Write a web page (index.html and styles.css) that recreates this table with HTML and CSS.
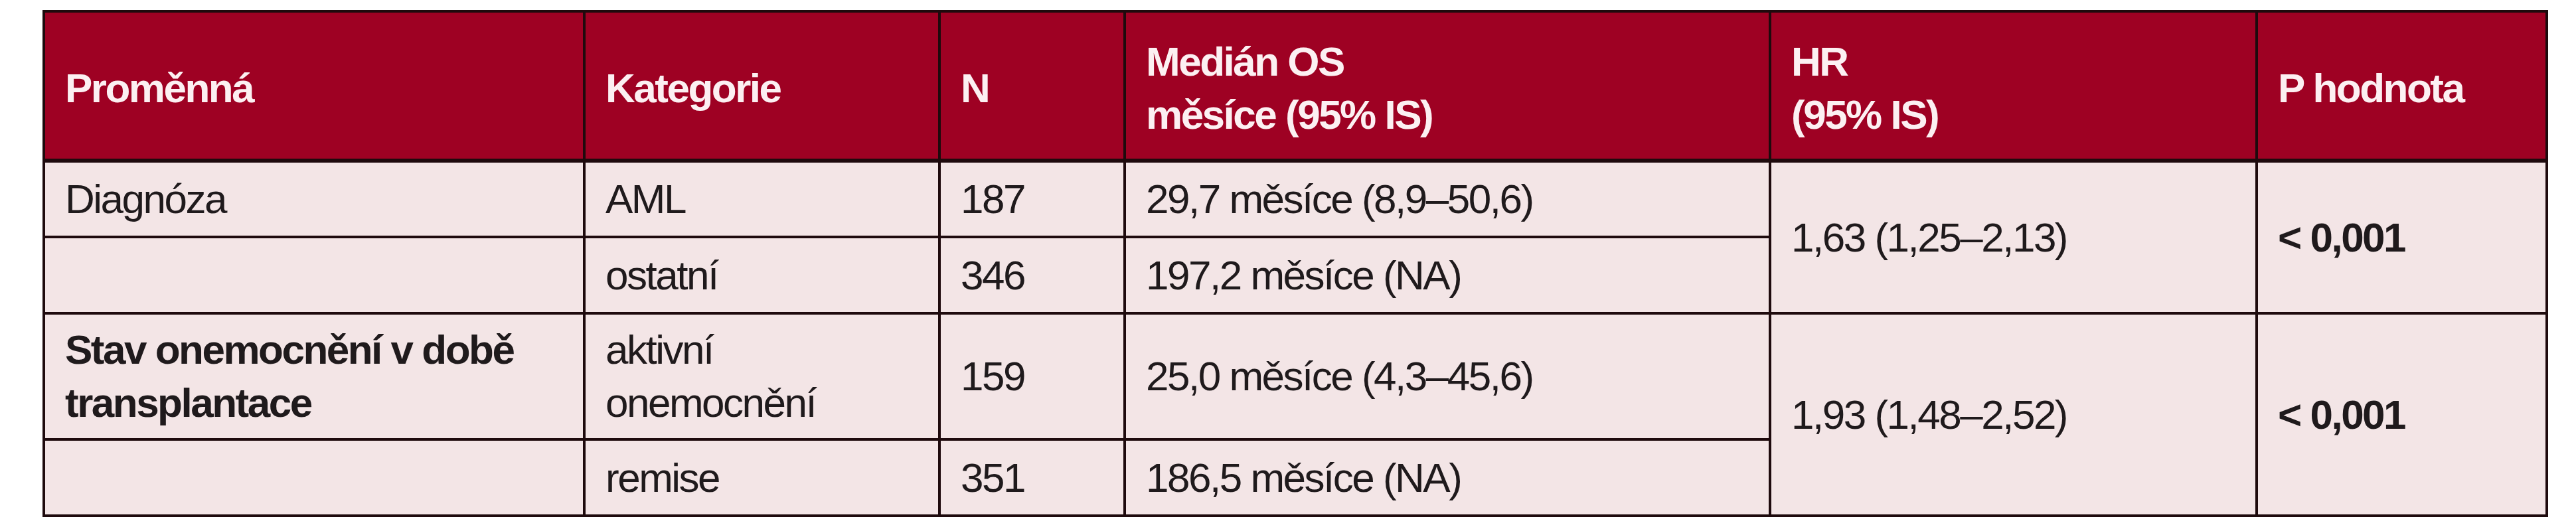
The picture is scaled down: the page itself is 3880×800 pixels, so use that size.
FILE: index.html
```html
<!DOCTYPE html>
<html lang="cs">
<head>
<meta charset="utf-8">
<title>Tabulka</title>
<link rel="stylesheet" href="styles.css">
</head>
<body>
<table class="tbl">
  <colgroup>
    <col class="c1"><col class="c2"><col class="c3"><col class="c4"><col class="c5"><col class="c6">
  </colgroup>
  <thead>
    <tr class="head">
      <th>Proměnná</th>
      <th>Kategorie</th>
      <th>N</th>
      <th>Medián OS<br>měsíce (95% IS)</th>
      <th>HR<br>(95% IS)</th>
      <th>P hodnota</th>
    </tr>
  </thead>
  <tbody>
    <tr class="row">
      <td>Diagnóza</td>
      <td>AML</td>
      <td>187</td>
      <td>29,7 měsíce (8,9–50,6)</td>
      <td rowspan="2">1,63 (1,25–2,13)</td>
      <td rowspan="2" class="b">&lt; 0,001</td>
    </tr>
    <tr class="row">
      <td></td>
      <td>ostatní</td>
      <td>346</td>
      <td>197,2 měsíce (NA)</td>
    </tr>
    <tr class="row-tall">
      <td class="b">Stav onemocnění v době<br>transplantace</td>
      <td>aktivní<br>onemocnění</td>
      <td>159</td>
      <td>25,0 měsíce (4,3–45,6)</td>
      <td rowspan="2">1,93 (1,48–2,52)</td>
      <td rowspan="2" class="b">&lt; 0,001</td>
    </tr>
    <tr class="row">
      <td></td>
      <td>remise</td>
      <td>351</td>
      <td>186,5 měsíce (NA)</td>
    </tr>
  </tbody>
</table>
</body>
</html>
```
FILE: styles.css
```css
html, body {
  margin: 0;
  padding: 0;
  background: #ffffff;
}

body {
  padding: 15px 0 0 64px;
  font-family: "Liberation Sans", Arial, sans-serif;
}

.tbl {
  border-collapse: collapse;
  table-layout: fixed;
  width: 3770px;
  font-size: 62px;
  letter-spacing: -2.5px;
  line-height: 80px;
  color: #1f1a1c;
}

.c1 { width: 814px; }
.c2 { width: 535px; }
.c3 { width: 279px; }
.c4 { width: 972px; }
.c5 { width: 733px; }
.c6 { width: 437px; }

.tbl th,
.tbl td {
  border: 4px solid #1e0a0d;
  padding: 0 30px;
  text-align: left;
  vertical-align: middle;
}

.tbl th {
  background: #9e0123;
  color: #fcf0f2;
  font-weight: bold;
  padding-top: 8px;
}

.head { height: 225px; }
.head th { border-bottom-width: 6px; }

.tbl td {
  background: #f3e5e6;
}

.row { height: 115px; }
.row-tall { height: 190px; }

.b { font-weight: bold; }
```
